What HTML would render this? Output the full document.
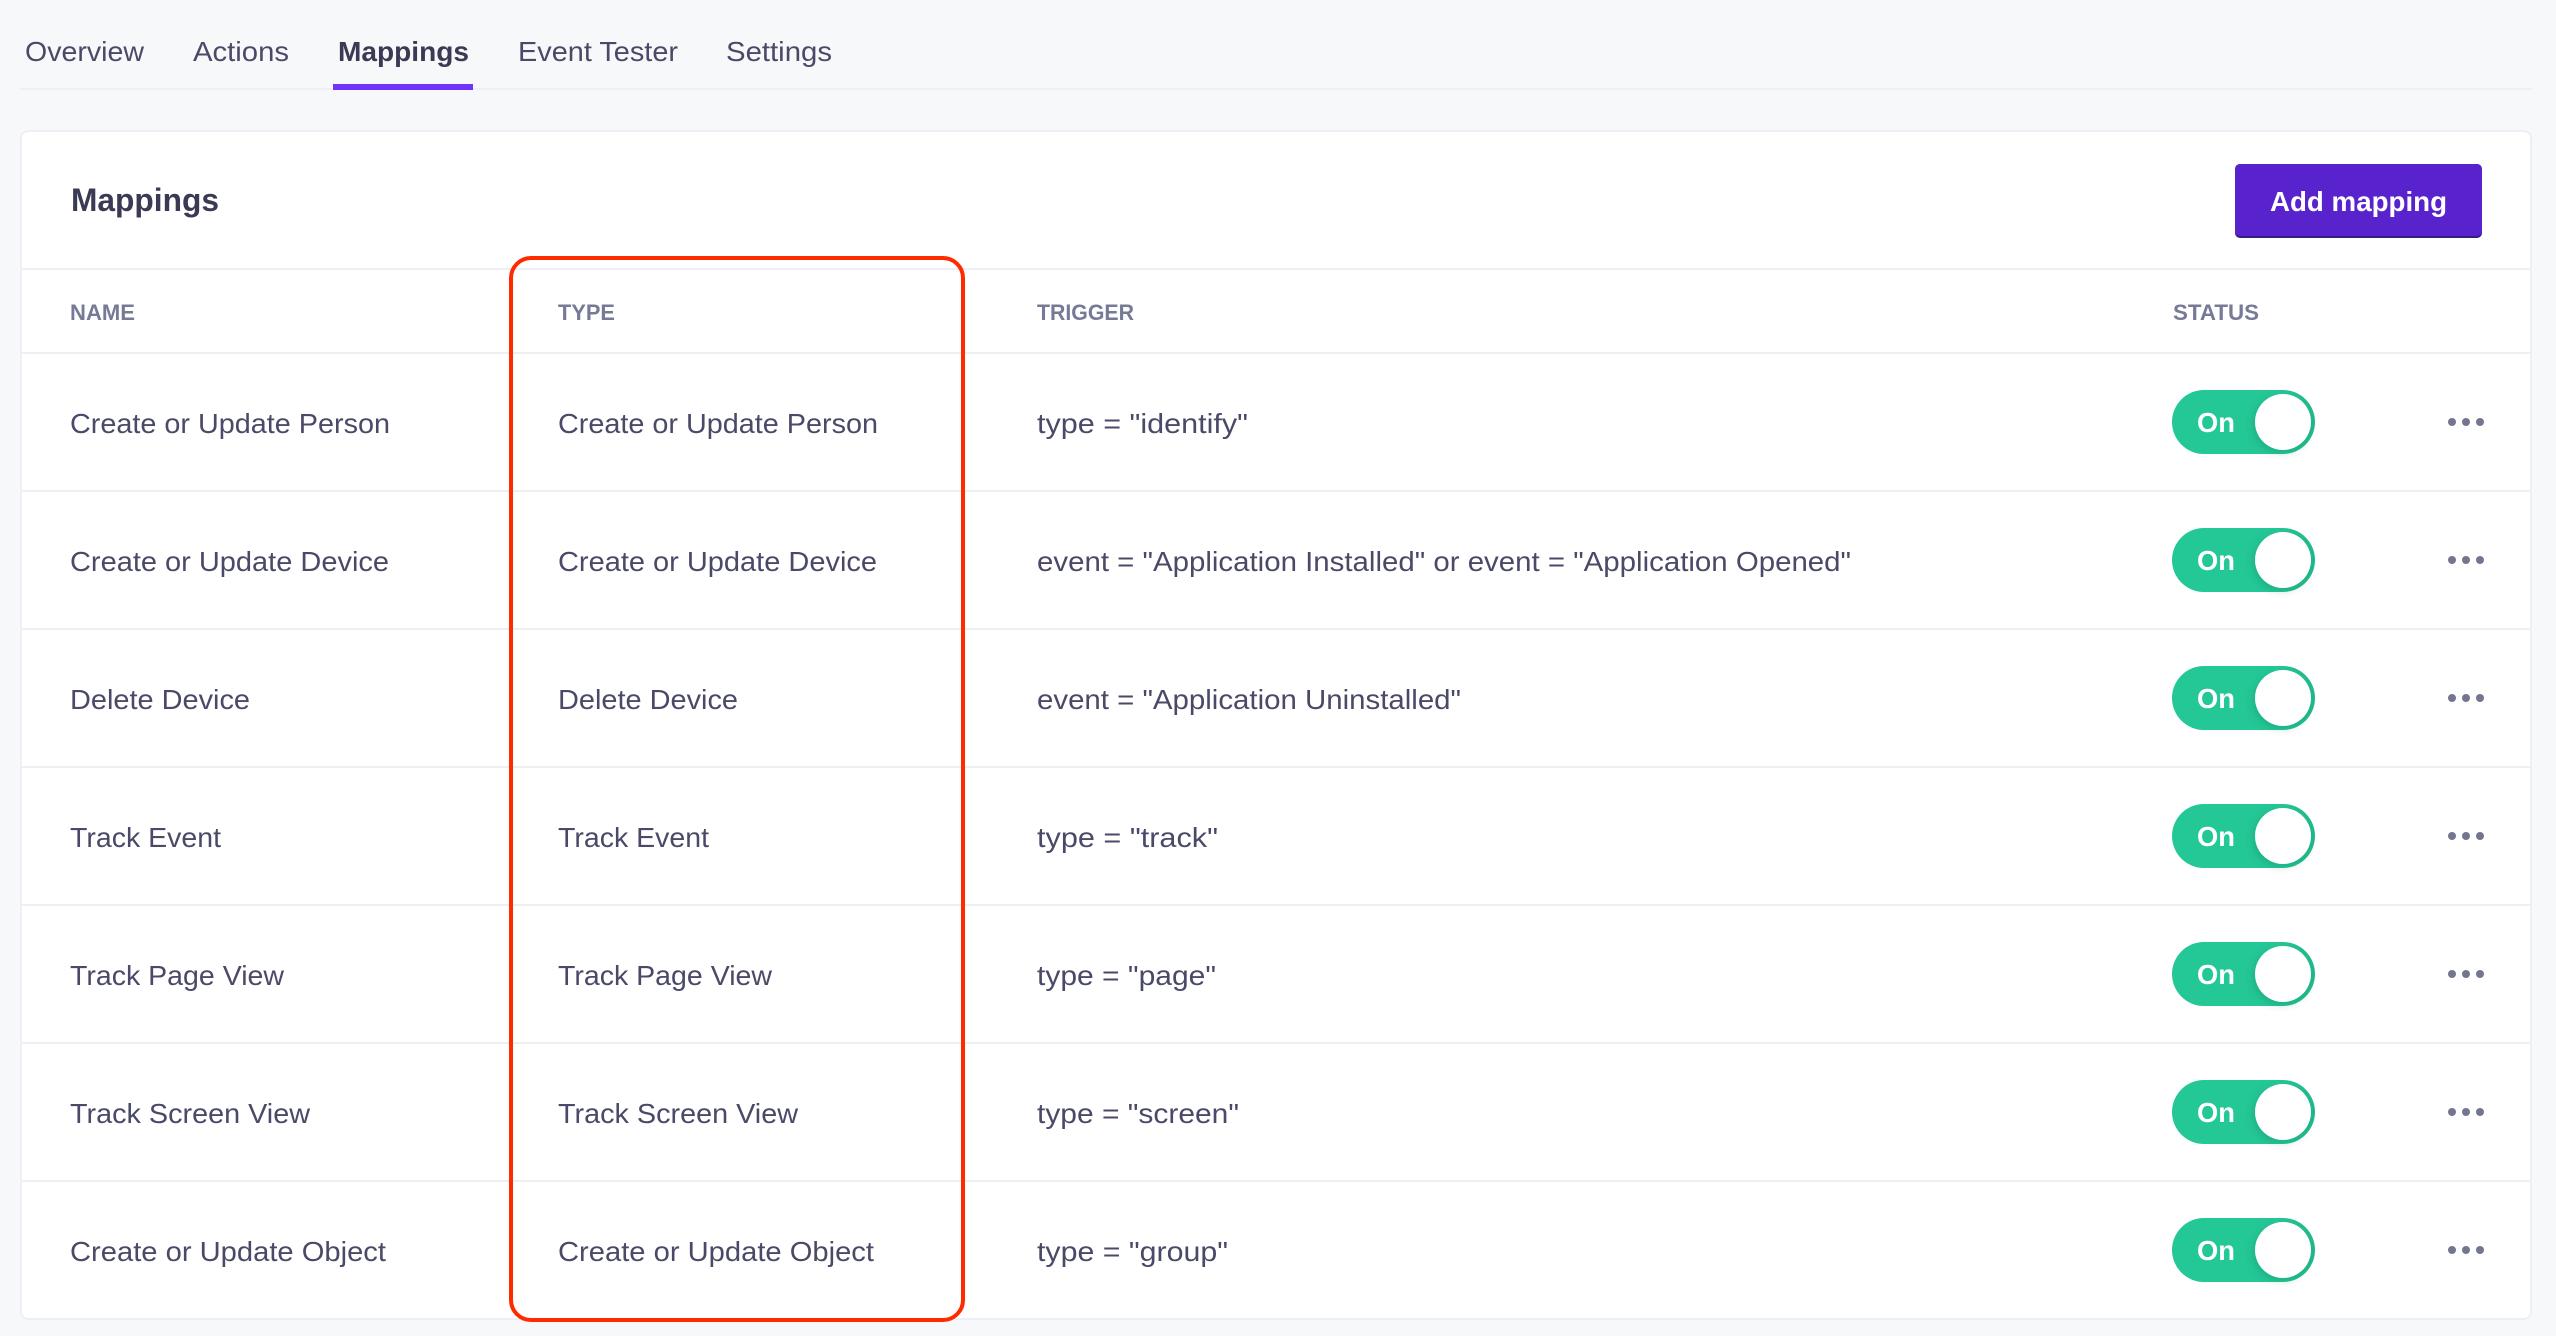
<!DOCTYPE html>
<html><head><meta charset="utf-8"><title>Mappings</title>
<style>
html,body{margin:0;padding:0;background:#f7f8fa;width:2556px;height:1336px;overflow:hidden}
svg{display:block;font-family:"Liberation Sans",Arial,sans-serif}
.tab{font-size:28px;fill:#4a4a68}
.th{font-size:22px;font-weight:700;fill:#767a96}
.td{font-size:28px;fill:#4a4a68}
.on{font-size:28px;font-weight:700;fill:#fff}
.dot{fill:#74768f}
</style></head><body>
<svg width="2556" height="1336" viewBox="0 0 2556 1336" xmlns="http://www.w3.org/2000/svg">
<defs>
<linearGradient id="g" x1="0" x2="1" y1="0" y2="0"><stop offset="0.75" stop-color="#24c796"/><stop offset="1" stop-color="#21b98d"/></linearGradient>
<filter id="s" x="-30%" y="-30%" width="160%" height="160%"><feDropShadow dx="-2" dy="3" stdDeviation="4" flood-color="#0a5a44" flood-opacity=".22"/></filter>
<g id="tg"><rect x="2172" y="390" width="143" height="64" rx="32" fill="url(#g)"/><circle cx="2283" cy="422" r="28" fill="#fff" filter="url(#s)"/><circle class="dot" cx="2452" cy="422" r="4"/><circle class="dot" cx="2466" cy="422" r="4"/><circle class="dot" cx="2480" cy="422" r="4"/></g>
</defs>
<rect width="2556" height="1336" fill="#f7f8fa"/>
<!-- tabs -->
<rect x="20" y="88" width="2512" height="2" fill="#eeeff4"/>
<rect x="333" y="84" width="140" height="6" fill="#7033fb"/>
<text class="tab" x="25" y="61" textLength="119" lengthAdjust="spacingAndGlyphs">Overview</text>
<text class="tab" x="193" y="61" textLength="96" lengthAdjust="spacingAndGlyphs">Actions</text>
<text class="tab" x="338" y="61" textLength="131" lengthAdjust="spacingAndGlyphs" style="font-weight:700;fill:#3a3a55">Mappings</text>
<text class="tab" x="518" y="61" textLength="160" lengthAdjust="spacingAndGlyphs">Event Tester</text>
<text class="tab" x="726" y="61" textLength="106" lengthAdjust="spacingAndGlyphs">Settings</text>
<!-- card -->
<rect x="21" y="131" width="2510" height="1188" rx="7" fill="#fff" stroke="#eeeff4" stroke-width="2"/>
<rect x="22" y="268" width="2508" height="2" fill="#eeeff4"/>
<rect x="22" y="352" width="2508" height="2" fill="#eeeff4"/>
<rect x="22" y="490" width="2508" height="2" fill="#eeeff4"/>
<rect x="22" y="628" width="2508" height="2" fill="#eeeff4"/>
<rect x="22" y="766" width="2508" height="2" fill="#eeeff4"/>
<rect x="22" y="904" width="2508" height="2" fill="#eeeff4"/>
<rect x="22" y="1042" width="2508" height="2" fill="#eeeff4"/>
<rect x="22" y="1180" width="2508" height="2" fill="#eeeff4"/>
<text x="71" y="211" font-size="32" font-weight="700" fill="#3a3a55" textLength="148" lengthAdjust="spacingAndGlyphs">Mappings</text>
<!-- button -->
<rect x="2235" y="164" width="247" height="74" rx="5" fill="#3a1a85"/>
<rect x="2235" y="164" width="247" height="72" rx="5" fill="#5822cc"/>
<text x="2270" y="211" font-size="28" font-weight="700" fill="#fff" textLength="177" lengthAdjust="spacingAndGlyphs">Add mapping</text>
<!-- header -->
<text class="th" x="70" y="320" textLength="65" lengthAdjust="spacingAndGlyphs">NAME</text>
<text class="th" x="558" y="320" textLength="57" lengthAdjust="spacingAndGlyphs">TYPE</text>
<text class="th" x="1037" y="320" textLength="97" lengthAdjust="spacingAndGlyphs">TRIGGER</text>
<text class="th" x="2173" y="320" textLength="86" lengthAdjust="spacingAndGlyphs">STATUS</text>
<!-- row 1 -->
<text class="td" x="70" y="433" textLength="320" lengthAdjust="spacingAndGlyphs">Create or Update Person</text>
<text class="td" x="558" y="433" textLength="320" lengthAdjust="spacingAndGlyphs">Create or Update Person</text>
<text class="td" x="1037" y="433" textLength="211" lengthAdjust="spacingAndGlyphs">type = "identify"</text>
<use href="#tg"/><text class="on" x="2197" y="432" textLength="38" lengthAdjust="spacingAndGlyphs">On</text>
<!-- row 2 -->
<text class="td" x="70" y="571" textLength="319" lengthAdjust="spacingAndGlyphs">Create or Update Device</text>
<text class="td" x="558" y="571" textLength="319" lengthAdjust="spacingAndGlyphs">Create or Update Device</text>
<text class="td" x="1037" y="571" textLength="814" lengthAdjust="spacingAndGlyphs">event = "Application Installed" or event = "Application Opened"</text>
<use href="#tg" y="138"/><text class="on" x="2197" y="570" textLength="38" lengthAdjust="spacingAndGlyphs">On</text>
<!-- row 3 -->
<text class="td" x="70" y="709" textLength="180" lengthAdjust="spacingAndGlyphs">Delete Device</text>
<text class="td" x="558" y="709" textLength="180" lengthAdjust="spacingAndGlyphs">Delete Device</text>
<text class="td" x="1037" y="709" textLength="424" lengthAdjust="spacingAndGlyphs">event = "Application Uninstalled"</text>
<use href="#tg" y="276"/><text class="on" x="2197" y="708" textLength="38" lengthAdjust="spacingAndGlyphs">On</text>
<!-- row 4 -->
<text class="td" x="70" y="847" textLength="151" lengthAdjust="spacingAndGlyphs">Track Event</text>
<text class="td" x="558" y="847" textLength="151" lengthAdjust="spacingAndGlyphs">Track Event</text>
<text class="td" x="1037" y="847" textLength="181" lengthAdjust="spacingAndGlyphs">type = "track"</text>
<use href="#tg" y="414"/><text class="on" x="2197" y="846" textLength="38" lengthAdjust="spacingAndGlyphs">On</text>
<!-- row 5 -->
<text class="td" x="70" y="985" textLength="214" lengthAdjust="spacingAndGlyphs">Track Page View</text>
<text class="td" x="558" y="985" textLength="214" lengthAdjust="spacingAndGlyphs">Track Page View</text>
<text class="td" x="1037" y="985" textLength="179" lengthAdjust="spacingAndGlyphs">type = "page"</text>
<use href="#tg" y="552"/><text class="on" x="2197" y="984" textLength="38" lengthAdjust="spacingAndGlyphs">On</text>
<!-- row 6 -->
<text class="td" x="70" y="1123" textLength="240" lengthAdjust="spacingAndGlyphs">Track Screen View</text>
<text class="td" x="558" y="1123" textLength="240" lengthAdjust="spacingAndGlyphs">Track Screen View</text>
<text class="td" x="1037" y="1123" textLength="202" lengthAdjust="spacingAndGlyphs">type = "screen"</text>
<use href="#tg" y="690"/><text class="on" x="2197" y="1122" textLength="38" lengthAdjust="spacingAndGlyphs">On</text>
<!-- row 7 -->
<text class="td" x="70" y="1261" textLength="316" lengthAdjust="spacingAndGlyphs">Create or Update Object</text>
<text class="td" x="558" y="1261" textLength="316" lengthAdjust="spacingAndGlyphs">Create or Update Object</text>
<text class="td" x="1037" y="1261" textLength="191" lengthAdjust="spacingAndGlyphs">type = "group"</text>
<use href="#tg" y="828"/><text class="on" x="2197" y="1260" textLength="38" lengthAdjust="spacingAndGlyphs">On</text>
<!-- red highlight -->
<rect x="511" y="258" width="452" height="1062" rx="20" fill="none" stroke="#ff2a00" stroke-width="4"/>
</svg>
</body></html>
